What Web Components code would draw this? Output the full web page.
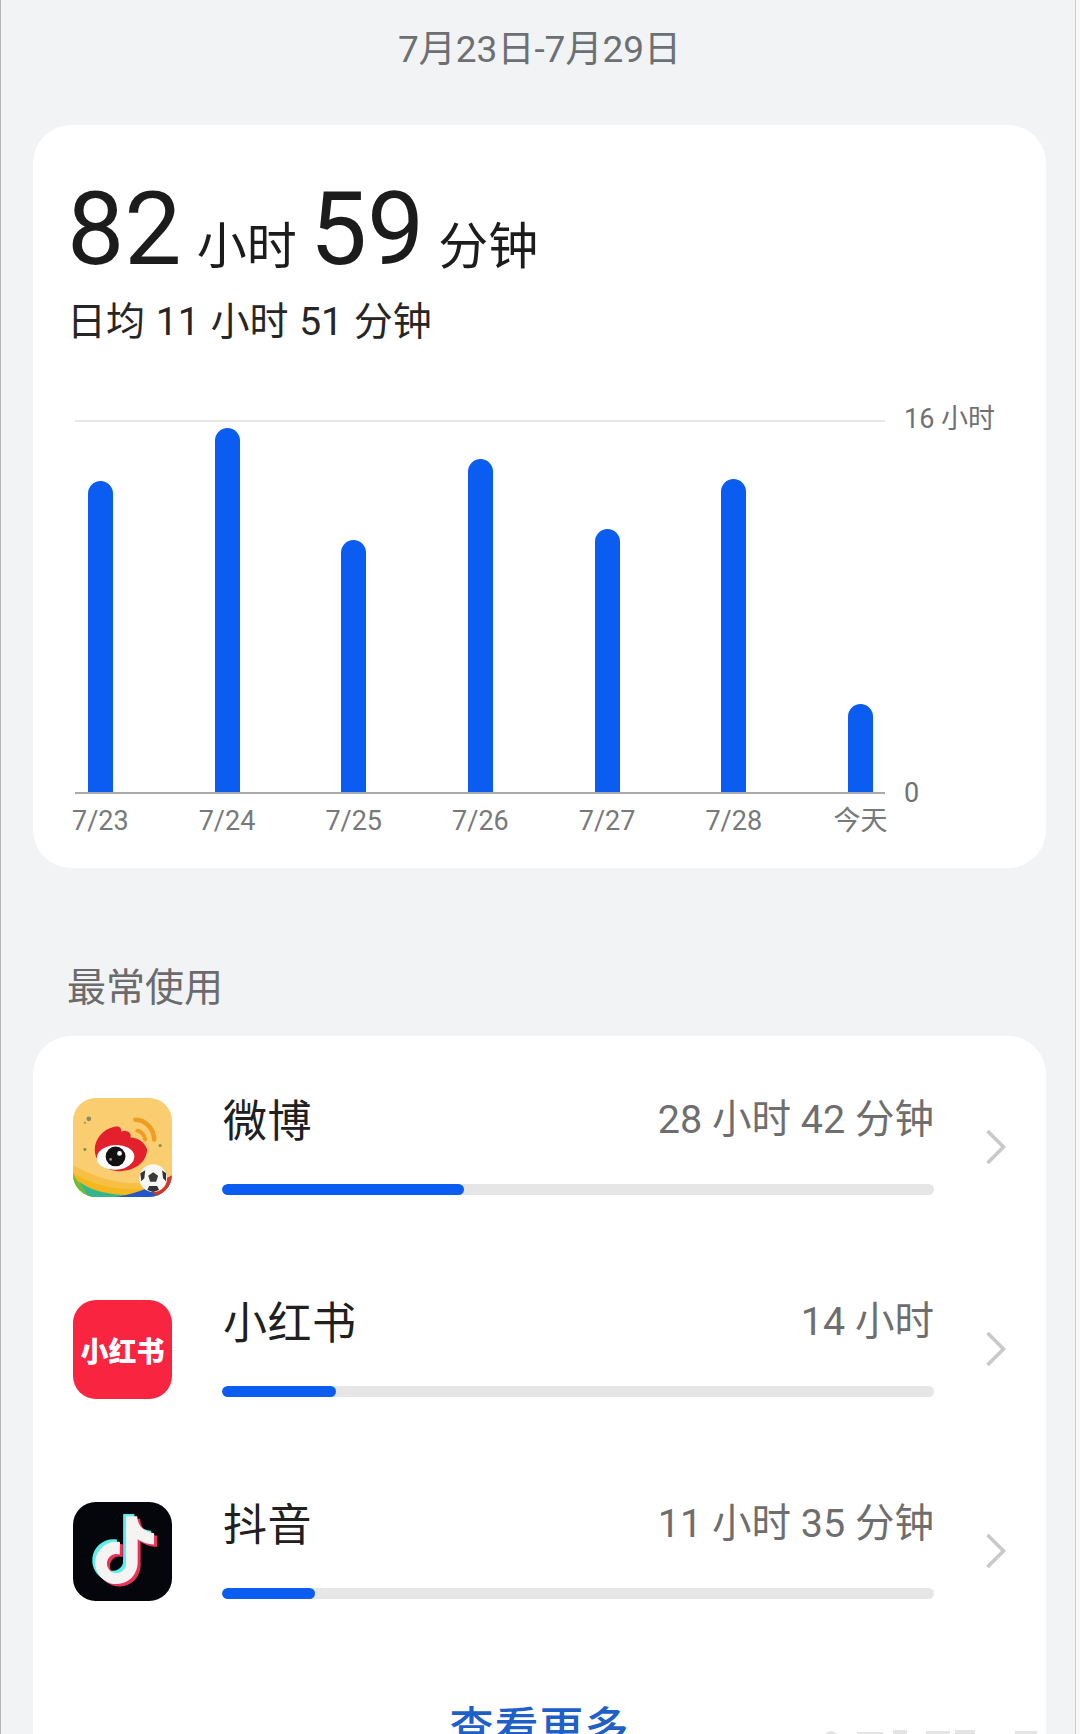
<!DOCTYPE html>
<html lang="zh-CN"><head><meta charset="utf-8"><title>使用时间</title>
<style>
html,body{margin:0;padding:0;background:#f1f3f5}
body{font-family:Roboto,"Noto Sans CJK SC",sans-serif}
</style></head><body>
<screen-time>
  <date-range>7月23日-7月29日</date-range>
  <summary-card></summary-card>
  <section-title>最常使用</section-title>
  <app-list>
    <app-row name="微博" time="28 小时 42 分钟" pct="34"><weibo-icon slot="icon"></weibo-icon></app-row>
    <app-row name="小红书" time="14 小时" pct="16"><red-icon slot="icon"></red-icon></app-row>
    <app-row name="抖音" time="11 小时 35 分钟" pct="13"><tiktok-icon slot="icon"></tiktok-icon></app-row>
    <more-link>查看更多</more-link>
  </app-list>
</screen-time>
<script>
const FONT='Roboto,"Noto Sans CJK SC",sans-serif';
function def(name,html,init){
  customElements.define(name,class extends HTMLElement{
    constructor(){super();this.attachShadow({mode:'open'}).innerHTML=html;}
    connectedCallback(){if(init)init(this,this.shadowRoot);}
  });
}
def('screen-time',`<style>
:host{display:block;position:relative;width:1080px;height:1734px;overflow:hidden;box-sizing:border-box;background:#f1f3f5;border-left:1px solid #b4b6b8;border-right:4px solid #f8f8f8;box-shadow:inset -1px 0 #cfd0d2;padding:0 30px 0 32px;font-family:${FONT}}
.wm{position:absolute;left:822px;top:1728px}
</style><slot></slot>
<svg class="wm" width="225" height="6" viewBox="0 0 225 6" fill="#e4e4e4"><path d="M2 6Q8 0 14 6zM34 4h26v2H34zM70 2h14v4H70zM103 3h24v3h-24zM132 2h20v4h-20zM192 3h22v3h-22z"/></svg>`);
def('date-range',`<style>:host{display:block;height:125px;box-sizing:border-box;padding-top:29px;text-align:center;font-size:37px;line-height:42px;color:#6d7073}</style><slot></slot>`);
def('summary-card',`<style>
:host{display:block;height:743px;box-sizing:border-box;background:#fff;border-radius:38px;padding:51px 0 0 34px;color:#1c1c1c}
.big{display:flex;align-items:baseline;height:106px;line-height:106px}
.n{font-size:102px;font-weight:400}
.u{font-size:50px}
.u.f{margin:0 13px 0 15px}
.u.s{margin:0 0 0 14px}
.avg{font-size:39px;line-height:46px;margin-top:17px;color:#262626;white-space:pre;word-spacing:1.1px}
.chart{margin-top:75px}
</style>
<div class="big"><span class="n">82</span><span class="u f">小时</span><span class="n">59</span><span class="u s">分钟</span></div>
<div class="avg">日均 11 小时 51 分钟</div>
<usage-chart class="chart"></usage-chart>`);
def('usage-chart',`<style>
:host{display:block;position:relative;height:450px;margin-left:8px}
.plot{width:810px;height:374px;display:flex;box-sizing:border-box;border-top:2px solid #e6e6e6;border-bottom:2px solid #a9a9a9}
.col{flex:0 0 126.7px;display:flex;justify-content:center;align-items:flex-end}
.col:first-child,.labels span:first-child{margin-left:-38px}
.bar{width:25px;background:#0b5cf0;border-radius:12.5px 12.5px 0 0}
.labels{display:flex;font-size:27px;line-height:34px;color:#77797b;margin-top:10px}
.labels span{flex:0 0 126.7px;text-align:center}
.y{position:absolute;left:829px;font-size:27px;line-height:34px;color:#6f7173;white-space:nowrap}
</style>
<div class="plot" id="p"></div><div class="labels" id="l"></div>
<div class="y" style="top:-18px">16 小时</div><div class="y" style="top:356px">0</div>`,
(el,r)=>{
  const h=[311,364,252,333,263,313,88],l=['7/23','7/24','7/25','7/26','7/27','7/28','今天'];
  if(r.getElementById('p').children.length)return;
  h.forEach((v,i)=>{
    r.getElementById('p').insertAdjacentHTML('beforeend',`<div class="col"><div class="bar" style="height:${v}px"></div></div>`);
    r.getElementById('l').insertAdjacentHTML('beforeend',`<span>${l[i]}</span>`);
  });
});
def('section-title',`<style>:host{display:block;height:168px;box-sizing:border-box;padding:97px 0 0 34px;font-size:39px;line-height:46px;color:#6b6b6b}</style><slot></slot>`);
def('app-list',`<style>:host{display:block;background:#fff;border-radius:38px;padding:62px 0 0 0;height:760px;box-sizing:border-box}</style><slot></slot>`);
def('app-row',`<style>
:host{display:flex;height:202px;box-sizing:border-box;padding-left:40px;align-items:flex-start}
.icon{flex:0 0 99px;height:99px}
.main{flex:0 0 712px;margin-left:50px}
.top{display:flex;justify-content:space-between;align-items:center;height:48px;margin-top:-2px}
.name{font-size:44px;line-height:48px;color:#202020;letter-spacing:.5px;margin:4px 0 0 1px}
.time{font-size:39.5px;line-height:48px;color:#6e6e6e;margin-top:-1px;white-space:pre}
.track{height:11px;background:#e6e6e6;border-radius:6px;margin-top:40px;overflow:hidden}
.fill{height:100%;background:#0b5cf0;border-radius:6px}
svg{margin:31px 0 0 51px;flex:none}
</style>
<div class="icon"><slot name="icon"></slot></div>
<div class="main"><div class="top"><span class="name" id="n"></span><span class="time" id="t"></span></div><div class="track"><div class="fill" id="f"></div></div></div>
<svg width="22" height="36" viewBox="0 0 22 36" fill="none" stroke="#c8c9ca" stroke-width="3.6"><path d="M2.5 2l16 16-16 16"/></svg>`,
(el,r)=>{r.getElementById('n').textContent=el.getAttribute('name');r.getElementById('t').textContent=el.getAttribute('time');r.getElementById('f').style.width=el.getAttribute('pct')+'%';});
def('weibo-icon',`<style>:host{display:block;width:99px;height:99px}svg{display:block}</style>
<svg width="99" height="99" viewBox="0 0 100 100"><defs><clipPath id="c"><rect width="100" height="100" rx="23"/></clipPath></defs>
<g clip-path="url(#c)"><rect width="100" height="100" fill="#f9cd70"/>
<path d="M0 68Q36 88 70 86L100 84V100H0Z" fill="#f7c044"/>
<path d="M0 76Q30 94 68 92L100 88V100H0Z" fill="#f4b81c"/>
<path d="M0 76Q6 92 34 100H0Z" fill="#6bbd3e"/><path d="M6 84Q20 96 52 98L62 100H16Z" fill="#35b58e"/>
<path d="M44 100Q62 97 78 90L100 84V100Z" fill="#2357c8"/><path d="M74 92L100 78V92L88 100Z" fill="#d5362a"/>
<circle cx="16" cy="21" r="2.4" fill="#8b8a60"/><circle cx="12" cy="25" r="1.2" fill="#a8a060"/><circle cx="12" cy="52" r="1.5" fill="#7d8c50"/><circle cx="88" cy="48" r="1.6" fill="#8a8a5a"/>
<path d="M22 52C22 42 30 31 42 29C46 28 49 30 49 34C54 31 60 36 58 40C66 40 72 45 75 52C74 62 68 72 48 74C32 74 22 64 22 52Z" fill="#e3202b"/>
<ellipse cx="43" cy="60" rx="19" ry="12.5" fill="#fff" transform="rotate(-4 43 60)"/>
<circle cx="43" cy="59" r="10" fill="#111"/><circle cx="47" cy="56" r="2.4" fill="#fff"/><circle cx="38" cy="62" r="1.4" fill="#999"/>
<path d="M63 22C73 22 82 31 82 42" fill="none" stroke="#ee9d22" stroke-width="4.5" stroke-linecap="round"/>
<path d="M65 33C69 34 72 37 73 42" fill="none" stroke="#ee9d22" stroke-width="4" stroke-linecap="round"/>
<circle cx="81" cy="81" r="14" fill="#f7f7f5"/><path d="M81 75l5 3.5-2 6h-6l-2-6z" fill="#3a3a3a"/>
<path d="M68 76l5-3-1 8-3 3zM94 76l-4-3 1 8 3 3zM75 93l2-4h8l2 4-6 2z" fill="#333"/>
</g></svg>`);
def('red-icon',`<style>:host{display:flex;width:99px;height:99px;background:#f9243f;border-radius:23px;align-items:center;justify-content:center;color:#fff;font:900 28px/1 "Noto Sans CJK SC",sans-serif;white-space:nowrap}</style>小红书`);
const TK="M12.525.02c1.31-.02 2.61-.01 3.91-.02.08 1.53.63 3.09 1.75 4.17 1.12 1.11 2.7 1.62 4.24 1.79v4.03c-1.44-.05-2.89-.35-4.2-.97-.57-.26-1.1-.59-1.62-.93-.01 2.92.01 5.84-.02 8.75-.08 1.4-.54 2.79-1.35 3.94-1.31 1.92-3.58 3.17-5.91 3.21-1.43.08-2.86-.31-4.08-1.03-2.02-1.19-3.44-3.37-3.65-5.71-.02-.5-.03-1-.01-1.49.18-1.9 1.12-3.72 2.58-4.96 1.66-1.44 3.98-2.13 6.15-1.72.02 1.48-.04 2.96-.04 4.44-.99-.32-2.15-.23-3.02.37-.63.41-1.11 1.04-1.36 1.75-.21.51-.15 1.07-.14 1.61.24 1.64 1.82 3.02 3.5 2.87 1.12-.01 2.19-.66 2.77-1.61.19-.33.4-.67.41-1.06.1-1.79.06-3.57.07-5.36.01-4.03-.01-8.05.02-12.07z";
def('tiktok-icon',`<style>:host{display:block;width:99px;height:99px}svg{display:block}</style>
<svg width="99" height="99" viewBox="0 0 100 100"><rect width="100" height="100" rx="23" fill="#05060c"/>
<g transform="translate(15 12) scale(2.85)"><path d="${TK}" fill="#5ceee8"/></g>
<g transform="translate(21 17) scale(2.85)"><path d="${TK}" fill="#e8345a"/></g>
<g transform="translate(18 14.5) scale(2.85)"><path d="${TK}" fill="#f6f3f3"/></g></svg>`);
def('more-link',`<style>:host{display:block;text-align:center;font-size:44px;line-height:52px;font-weight:500;color:#1f5fc8;margin-top:-1px;letter-spacing:1px}</style><slot></slot>`);
</script></body></html>
